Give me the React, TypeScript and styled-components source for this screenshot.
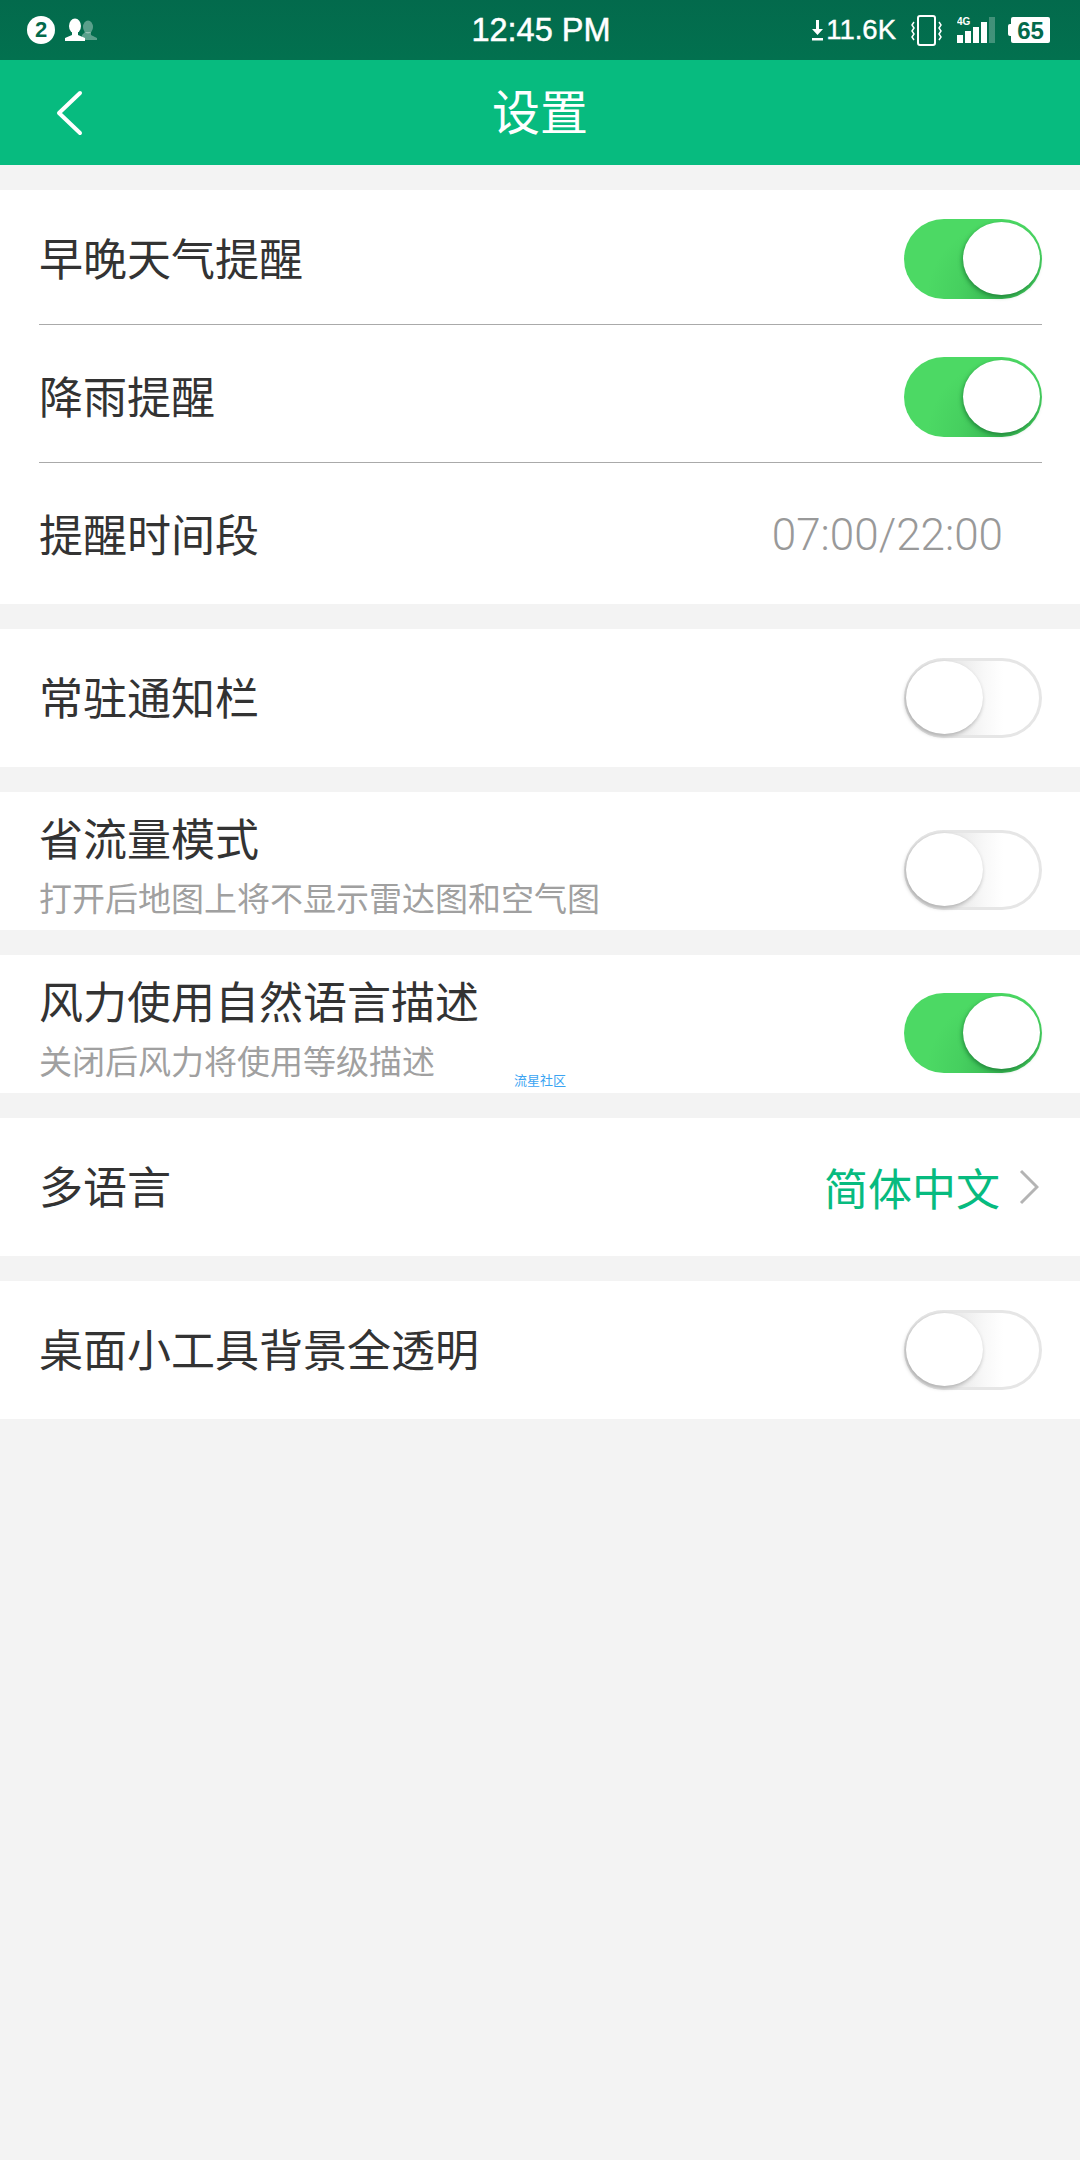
import React from "react";
import styled, { createGlobalStyle } from "styled-components";

const GlobalStyle = createGlobalStyle`
    html, body {
        margin: 0;
        padding: 0;
        background: #f3f3f3;
    }
    body {
        font-family: "Noto Sans CJK SC", "Liberation Sans", sans-serif;
    }
`;

const Page = styled.div`
    width: 1080px;
    min-height: 2160px;
    background: #f3f3f3;
    display: flex;
    flex-direction: column;
`;

const StatusBar = styled.div`
    height: 60px;
    box-sizing: border-box;
    padding: 0 30px 0 27px;
    background: linear-gradient(#036a4c, #02714f);
    color: #fff;
    display: grid;
    grid-template-columns: 1fr auto 1fr;
    align-items: center;
`;

const StatusLeft = styled.div`
    display: flex;
    align-items: center;
    gap: 9px;
`;

const StatusRight = styled.div`
    display: flex;
    align-items: center;
    justify-content: flex-end;
`;

const Badge = styled.span`
    width: 28px;
    height: 28px;
    border-radius: 50%;
    background: #fff;
    color: #036a4c;
    font: 700 22px/28px "Liberation Sans", sans-serif;
    text-align: center;
`;

const Clock = styled.span`
    margin-left: 5px;
    font: 400 32.5px/60px "Liberation Sans", sans-serif;
    -webkit-text-stroke: 0.5px #fff;
`;

const Speed = styled.span`
    font: 400 27.5px/60px "Liberation Sans", sans-serif;
    margin: 0 15px 0 3px;
    -webkit-text-stroke: 0.4px #fff;
`;

const SignalSlot = styled.span`
    margin-left: 15px;
    display: flex;
`;

const Battery = styled.span`
    position: relative;
    width: 39px;
    height: 26px;
    margin-left: 16px;
    border-radius: 2px;
    background: #fff;
    color: #036a4c;
    font: 700 24px/27px "Liberation Sans", sans-serif;
    text-align: center;

    &::before {
        content: "";
        position: absolute;
        left: -3px;
        top: 7px;
        width: 3px;
        height: 12px;
        border-radius: 2px 0 0 2px;
        background: #fff;
    }
`;

const Toolbar = styled.header`
    height: 105px;
    background: #07bb7f;
    position: relative;
    display: flex;
    align-items: center;
    justify-content: center;
`;

const BackButton = styled.button`
    position: absolute;
    left: 54px;
    top: 30px;
    padding: 0;
    border: none;
    background: none;
    display: flex;
`;

const Title = styled.h1`
    margin: 0 0 6px;
    color: #fff;
    font-size: 48px;
    font-weight: 400;
    line-height: 99px;
`;

const List = styled.main`
    padding-top: 25px;
    display: flex;
    flex-direction: column;
    gap: 25px;
`;

const Section = styled.section`
    position: relative;
    background: #fff;
`;

const Row = styled.div<{ $divided?: boolean }>`
    position: relative;
    height: 138px;
    padding: 0 38px 0 39px;
    display: flex;
    align-items: center;
    justify-content: space-between;

    ${(p) =>
        p.$divided &&
        `&::after {
            content: "";
            position: absolute;
            left: 39px;
            right: 38px;
            bottom: 3px;
            height: 1px;
            background: #aaa;
        }`}
`;

const Label = styled.span`
    padding-bottom: 5px;
    color: #333;
    font-size: 44px;
    line-height: 60px;
`;

const LabelBlock = styled.div`
    align-self: flex-start;
    padding-top: 15px;
    display: flex;
    flex-direction: column;
`;

const Hint = styled.span`
    margin-top: 8px;
    color: #a0a0a0;
    font-size: 33px;
    line-height: 34px;
`;

const TimeRange = styled.span`
    margin-right: 39px;
    color: #999;
    font: 300 44px/60px Roboto, "Liberation Sans", sans-serif;
`;

const LanguageValue = styled.div`
    display: flex;
    align-items: center;
    gap: 19px;
    margin-right: 3px;
    color: #07bb7f;
    font-size: 44px;
    line-height: 60px;
`;

const Watermark = styled.span`
    position: absolute;
    left: 514px;
    top: 117px;
    color: #3ba4f2;
    font-size: 13px;
    line-height: 16px;
`;

const Track = styled.div<{ $on?: boolean; $drop?: boolean }>`
    position: relative;
    flex: none;
    width: 138px;
    height: 80px;
    margin-top: ${(p) => (p.$drop ? 18 : 0)}px;
    box-sizing: border-box;
    border-radius: 40px;
    background: ${(p) =>
        p.$on
            ? "radial-gradient(circle at 72% 100%, #38b552 0, #46cf5f 34%, #4cd964 60%)"
            : "linear-gradient(90deg, #ececec 42%, #f8f8f8 58%, #fff 72%)"};
    box-shadow: ${(p) => (p.$on ? "none" : "inset 0 0 0 3px #e6e6e6")};
    filter: blur(0.6px);
`;

const Knob = styled.div<{ $on?: boolean }>`
    position: absolute;
    top: 3px;
    left: ${(p) => (p.$on ? 59 : 2)}px;
    width: 77px;
    height: 73px;
    border-radius: 50%;
    background: #fff;
    box-shadow: ${(p) =>
        p.$on
            ? "-1px 2px 4px rgba(10, 90, 35, 0.55)"
            : "-1px 2px 4px rgba(0, 0, 0, 0.28)"};
`;

const Toggle = ({ on, drop }: { on?: boolean; drop?: boolean }) => (
    <Track $on={on} $drop={drop}>
        <Knob $on={on} />
    </Track>
);

const ContactsIcon = () => (
    <svg width="34" height="24" viewBox="0 0 34 24">
        <g fill="#fff" fillOpacity="0.35">
            <ellipse cx="24" cy="9" rx="5" ry="6.5" />
            <path d="M21 14h6v3l6 3v2H18v-5z" />
        </g>
        <g fill="#fff">
            <ellipse cx="11" cy="8" rx="6" ry="7.5" />
            <path d="M8 14h6v3l7 3v3H1v-3l7-3z" />
        </g>
    </svg>
);

const DownloadIcon = () => (
    <svg width="11" height="24" viewBox="0 0 11 24">
        <path d="M4 2h3v9h4l-5.500 6L0 11h4z" fill="#fff" />
        <rect y="20" width="11" height="2.500" fill="#fff" />
    </svg>
);

const VibrateIcon = () => (
    <svg width="31" height="31" viewBox="0 0 31 31" fill="none" stroke="#fff">
        <rect x="7" y="1" width="17" height="29" rx="2" strokeWidth="2" />
        <path
            d="M3 7l-2 3 2 3-2 3 2 3-2 3 2 3M28 7l2 3-2 3 2 3-2 3 2 3-2 3"
            strokeWidth="1.500"
        />
    </svg>
);

const SignalIcon = () => (
    <svg width="38" height="28" viewBox="0 0 38 28">
        <text
            x="0"
            y="9"
            fill="#fff"
            fontFamily="Liberation Sans"
            fontWeight="700"
            fontSize="10"
        >
            4G
        </text>
        <g fill="#fff">
            <rect y="19" width="6" height="8" />
            <rect x="8" y="15" width="6" height="12" />
            <rect x="16" y="11" width="6" height="16" />
            <rect x="24" y="6" width="6" height="21" />
        </g>
        <rect x="32" y="1" width="6" height="26" fill="#fff" fillOpacity="0.25" />
    </svg>
);

const BackIcon = () => (
    <svg width="30" height="46" viewBox="0 0 30 46" fill="none">
        <path
            d="M26 3L5 23l21 20"
            stroke="#fff"
            strokeWidth="4"
            strokeLinecap="round"
            strokeLinejoin="round"
        />
    </svg>
);

const ChevronIcon = () => (
    <svg width="20" height="36" viewBox="0 0 20 36" fill="none">
        <path d="M2 2l16 16L2 34" stroke="#b4b4b4" strokeWidth="3" />
    </svg>
);

const App = () => {
    return (
        <>
            <GlobalStyle />
            <Page>
                <StatusBar>
                    <StatusLeft>
                        <Badge>2</Badge>
                        <ContactsIcon />
                    </StatusLeft>
                    <Clock>12:45 PM</Clock>
                    <StatusRight>
                        <DownloadIcon />
                        <Speed>11.6K</Speed>
                        <VibrateIcon />
                        <SignalSlot>
                            <SignalIcon />
                        </SignalSlot>
                        <Battery>65</Battery>
                    </StatusRight>
                </StatusBar>
                <Toolbar>
                    <BackButton>
                        <BackIcon />
                    </BackButton>
                    <Title>设置</Title>
                </Toolbar>
                <List>
                    <Section>
                        <Row $divided>
                            <Label>早晚天气提醒</Label>
                            <Toggle on />
                        </Row>
                        <Row $divided>
                            <Label>降雨提醒</Label>
                            <Toggle on />
                        </Row>
                        <Row>
                            <Label>提醒时间段</Label>
                            <TimeRange>07:00/22:00</TimeRange>
                        </Row>
                    </Section>
                    <Section>
                        <Row>
                            <Label>常驻通知栏</Label>
                            <Toggle />
                        </Row>
                    </Section>
                    <Section>
                        <Row>
                            <LabelBlock>
                                <Label>省流量模式</Label>
                                <Hint>打开后地图上将不显示雷达图和空气图</Hint>
                            </LabelBlock>
                            <Toggle drop />
                        </Row>
                    </Section>
                    <Section>
                        <Row>
                            <LabelBlock>
                                <Label>风力使用自然语言描述</Label>
                                <Hint>关闭后风力将使用等级描述</Hint>
                            </LabelBlock>
                            <Toggle on drop />
                        </Row>
                        <Watermark>流星社区</Watermark>
                    </Section>
                    <Section>
                        <Row>
                            <Label>多语言</Label>
                            <LanguageValue>
                                简体中文
                                <ChevronIcon />
                            </LanguageValue>
                        </Row>
                    </Section>
                    <Section>
                        <Row>
                            <Label>桌面小工具背景全透明</Label>
                            <Toggle />
                        </Row>
                    </Section>
                </List>
            </Page>
        </>
    );
};

export default App;
